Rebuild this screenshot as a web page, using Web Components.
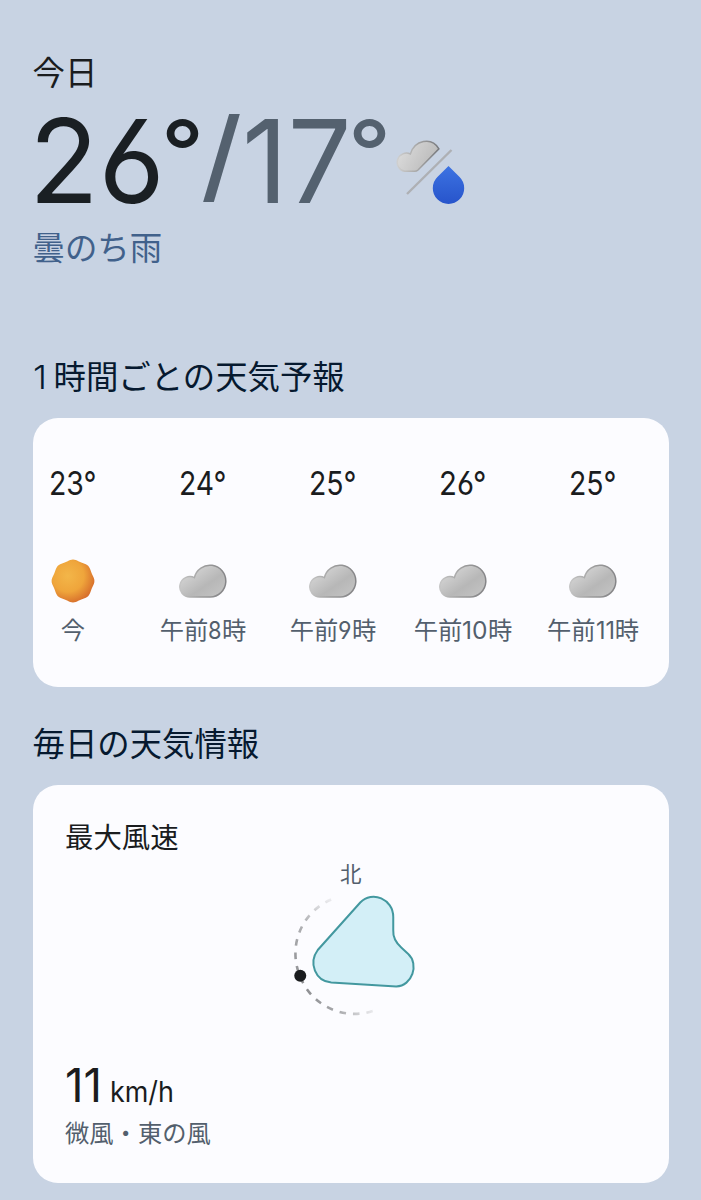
<!DOCTYPE html>
<html lang="ja">
<head>
<meta charset="UTF-8">
<title>天気</title>
<style>
    body {
        margin: 0;
        background: #c8d3e3;
        font-family: "Noto Sans CJK JP", "Noto Sans", sans-serif;
        color: #1a1c1e;
    }
</style>
</head>
<body>
<weather-app></weather-app>

<script>
// Latin digits and units, squeezed to the narrow widths of the design
class LatinText extends HTMLElement {
    constructor() {
        super();
        this.attachShadow({ mode: "open" });
        this.shadowRoot.innerHTML = `
            <style>
                :host {
                    display: inline-block;
                    font-family: Inter, "Noto Sans", sans-serif;
                    font-feature-settings: "cv03", "cv04";
                    white-space: nowrap;
                }
                span {
                    display: inline-block;
                    transform-origin: 0 50%;
                }
            </style>
            <span><slot></slot></span>
        `;
    }

    connectedCallback() {
        const width = parseFloat(this.getAttribute("width"));
        const span = this.shadowRoot.querySelector("span");
        const natural = span.getBoundingClientRect().width;
        if (width && natural) {
            this.style.width = width + "px";
            span.style.transform = `scaleX(${width / natural})`;
        }
    }
}

// Sun outline: a circle with eight soft lobes
function sunPath() {
    const points = [];
    for (let i = 0; i < 96; i++) {
        const a = (i / 96) * Math.PI * 2;
        const r = 20.8 + 0.6 * Math.cos(a * 8);
        points.push((22 + r * Math.cos(a)).toFixed(2) + " " + (22 + r * Math.sin(a)).toFixed(2));
    }
    return "M" + points.join("L") + "Z";
}

class WeatherIcon extends HTMLElement {
    constructor() {
        super();
        this.attachShadow({ mode: "open" });
    }

    connectedCallback() {
        const icons = {
            sun: `
                <svg width="44" height="44" viewBox="0 0 44 44">
                    <defs>
                        <radialGradient id="s" cx=".38" cy=".38" r=".68">
                            <stop offset="0" stop-color="#f3b649"/>
                            <stop offset=".55" stop-color="#efa53b"/>
                            <stop offset="1" stop-color="#d5692a"/>
                        </radialGradient>
                    </defs>
                    <path fill="url(#s)" d="${sunPath()}"/>
                </svg>`,
            cloud: `
                <svg width="48" height="34" viewBox="0 0 48 34">
                    <defs>
                        <linearGradient id="c" x1="0" y1="0" x2="1" y2="1">
                            <stop offset=".1" stop-color="#dadada"/>
                            <stop offset=".6" stop-color="#b7b7b7"/>
                            <stop offset="1" stop-color="#c6c6c6"/>
                        </linearGradient>
                        <linearGradient id="e" x1="0" y1=".4" x2="1" y2=".5">
                            <stop offset="0" stop-color="#c8c8c8"/>
                            <stop offset=".5" stop-color="#9c9c9c"/>
                            <stop offset="1" stop-color="#858588"/>
                        </linearGradient>
                    </defs>
                    <path fill="url(#c)" stroke="url(#e)" stroke-width="1.500" d="M11 33A10.200 10.200 0 1 1 15.400 13.600A15.900 15.900 0 1 1 31.200 33Z"/>
                </svg>`,
            "cloud-rain": `
                <svg width="72" height="64" viewBox="0 0 72 64">
                    <defs>
                        <linearGradient id="c" x1="0" y1=".3" x2="1" y2=".7">
                            <stop offset="0" stop-color="#dcdcdc"/>
                            <stop offset="1" stop-color="#b7b7b7"/>
                        </linearGradient>
                        <linearGradient id="e" x1="0" y1=".4" x2="1" y2=".4">
                            <stop offset="0" stop-color="#cfcfcf"/>
                            <stop offset=".5" stop-color="#a5a5a5"/>
                            <stop offset="1" stop-color="#77797d"/>
                        </linearGradient>
                        <linearGradient id="d" x1="0" y1="0" x2="0" y2="1">
                            <stop offset="0" stop-color="#3d73e2"/>
                            <stop offset="1" stop-color="#2754cb"/>
                        </linearGradient>
                    </defs>
                    <path fill="url(#c)" stroke="url(#e)" stroke-width="1.500" d="M9.500 31.300A9.200 9.200 0 1 1 15.400 14C19.500 .2 36.500-3.600 43.900 8.800L23 30Q21.600 31.300 19.600 31.300Z"/>
                    <path stroke="#aeb0b4" stroke-width="2.400" d="M12 54L56.500 10"/>
                    <path fill="url(#d)" d="M53.500 26L64.600 37.100A15.700 15.700 0 1 1 42.400 37.100Z"/>
                </svg>`
        };
        this.shadowRoot.innerHTML = `
            <style>
                :host { display: block; }
                svg { display: block; }
            </style>
            ${icons[this.getAttribute("name")]}
        `;
    }
}

class TodaySummary extends HTMLElement {
    constructor() {
        super();
        this.attachShadow({ mode: "open" });
        this.shadowRoot.innerHTML = `
            <style>
                :host {
                    display: block;
                    height: 304px;
                    font-size: 32.400px;
                    line-height: 40px;
                }
                .temps {
                    display: flex;
                    align-items: flex-start;
                    height: 135px;
                    font-size: 116px;
                    line-height: 140px;
                    color: #1a1f23;
                }
                .high { margin-left: -3.500px; }
                .degree {
                    margin: -10px 0 0 -4px;
                    font-size: 86px;
                    font-weight: 500;
                }
                .slash {
                    margin: -7px 0 0 -3px;
                    font-size: 101px;
                    font-weight: 500;
                }
                .low { color: #54616f; }
                weather-icon { margin: 49px 0 0 4px; }
                .condition { color: #41618b; }
            </style>
            <div>今日</div>
            <div class="temps">
                <latin-text class="high" width="136">26</latin-text>
                <latin-text class="degree" width="43">°</latin-text>
                <latin-text class="low slash" width="41">/</latin-text>
                <latin-text class="low" width="109.500">17</latin-text>
                <latin-text class="low degree" width="43">°</latin-text>
                <weather-icon name="cloud-rain"></weather-icon>
            </div>
            <div class="condition">曇のち雨</div>
        `;
    }
}

class SectionHeading extends HTMLElement {
    constructor() {
        super();
        this.attachShadow({ mode: "open" });
        this.shadowRoot.innerHTML = `
            <style>
                :host {
                    display: block;
                    height: 63px;
                    font-size: 32.400px;
                    line-height: 40px;
                    color: #06192f;
                    white-space: nowrap;
                }
            </style>
            <slot></slot>
        `;
    }
}

class WeatherCard extends HTMLElement {
    constructor() {
        super();
        this.attachShadow({ mode: "open" });
        this.shadowRoot.innerHTML = `
            <style>
                :host {
                    display: block;
                    box-sizing: border-box;
                    background: #fcfcff;
                    border-radius: 25px;
                    overflow: hidden;
                }
            </style>
            <slot></slot>
        `;
    }
}

class HourItem extends HTMLElement {
    constructor() {
        super();
        this.attachShadow({ mode: "open" });
    }

    connectedCallback() {
        const time = this.getAttribute("time")
            .replace(/\d+/, (n) => `<latin-text width="${n.length > 1 ? (n === "11" ? 19 : 25.5) : 13.5}">${n}</latin-text>`);
        this.shadowRoot.innerHTML = `
            <style>
                :host {
                    display: flex;
                    flex-direction: column;
                    align-items: center;
                }
                .temp {
                    height: 40px;
                    font-size: 33px;
                    line-height: 40px;
                    color: #1a1c1e;
                }
                .icon {
                    display: flex;
                    align-items: center;
                    height: 48px;
                    margin-top: 56px;
                }
                .time {
                    margin-top: 8px;
                    font-size: 24.300px;
                    line-height: 32px;
                    color: #535f6d;
                    white-space: nowrap;
                }
            </style>
            <div class="temp"><latin-text width="47.500">${this.getAttribute("temp")}</latin-text></div>
            <div class="icon"><weather-icon name="${this.getAttribute("icon")}"></weather-icon></div>
            <div class="time">${time}</div>
        `;
    }
}

class WindCompass extends HTMLElement {
    constructor() {
        super();
        this.attachShadow({ mode: "open" });
        this.shadowRoot.innerHTML = `
            <style>
                :host {
                    display: flex;
                    flex-direction: column;
                    align-items: center;
                    font-size: 21.500px;
                    line-height: 28px;
                    color: #535f6d;
                }
                svg { display: block; margin-top: 1px; }
            </style>
            <div>北</div>
            <svg width="140" height="140" viewBox="280.750 888 140 140">
                <defs>
                    <linearGradient id="up" gradientUnits="userSpaceOnUse" x1="0" y1="976" x2="0" y2="898">
                        <stop offset=".2" stop-color="#97989b"/>
                        <stop offset=".7" stop-color="#b2b3b6"/>
                        <stop offset="1" stop-color="#efeff2"/>
                    </linearGradient>
                    <linearGradient id="down" gradientUnits="userSpaceOnUse" x1="300" y1="0" x2="376" y2="0">
                        <stop offset="0" stop-color="#8a8b8e"/>
                        <stop offset=".5" stop-color="#a9aaad"/>
                        <stop offset="1" stop-color="#efeff2"/>
                    </linearGradient>
                </defs>
                <g fill="none" stroke-width="2.600" stroke-dasharray="6.500 7">
                    <path stroke="url(#up)" stroke-dashoffset="-3.500" d="M299.500 975.500A58.500 58.500 0 0 1 331 899.500"/>
                    <path stroke="url(#down)" stroke-dashoffset="-2" d="M299.500 975.500A58.500 58.500 0 0 0 374 1010.500"/>
                </g>
                <path fill="#d3eff7" stroke="#43989f" stroke-width="2" d="M360 902.500C372 890 393 899 393 917V930C392.500 938 396 943 401 947.500L408 954C419 964 412 986 396 986.500L331 982.500C315 981 308 963 317.500 950Z"/>
                <circle cx="300" cy="975.800" r="6" fill="#1a1c1e"/>
            </svg>
        `;
    }
}

class WindPanel extends HTMLElement {
    constructor() {
        super();
        this.attachShadow({ mode: "open" });
        this.shadowRoot.innerHTML = `
            <style>
                :host {
                    display: block;
                    box-sizing: border-box;
                    padding: 31px 32.500px 0;
                }
                .title {
                    font-size: 28.400px;
                    line-height: 40px;
                    height: 43px;
                }
                .speed {
                    display: flex;
                    align-items: baseline;
                    gap: 8px;
                    height: 59px;
                    margin-top: 29px;
                    font-size: 46px;
                    line-height: 56px;
                }
                .unit { font-size: 29px; }
                .note {
                    font-size: 24.300px;
                    line-height: 32px;
                    color: #535f6d;
                }
            </style>
            <div class="title">最大風速</div>
            <wind-compass></wind-compass>
            <div class="speed">
                <latin-text width="37">11</latin-text>
                <latin-text class="unit" width="64">km/h</latin-text>
            </div>
            <div class="note">微風・東の風</div>
        `;
    }
}

class WeatherApp extends HTMLElement {
    constructor() {
        super();
        this.attachShadow({ mode: "open" });
        this.shadowRoot.innerHTML = `
            <style>
                :host {
                    display: block;
                    box-sizing: border-box;
                    height: 1200px;
                    padding: 51px 32px 0 32.500px;
                    overflow: hidden;
                }
                .hourly { height: 269px; }
                .hours {
                    display: grid;
                    grid-template-columns: repeat(5, 130px);
                    margin-left: -24.500px;
                    padding-top: 43px;
                }
                .count {
                    margin-right: 7px;
                    font-weight: 300;
                }
                .daily { height: 398px; }
                section + section { margin-top: 35px; }
            </style>
            <today-summary></today-summary>
            <section>
                <section-heading><latin-text class="count" width="14">1</latin-text>時間ごとの天気予報</section-heading>
                <weather-card class="hourly">
                    <div class="hours">
                        <hour-item temp="23°" icon="sun" time="今"></hour-item>
                        <hour-item temp="24°" icon="cloud" time="午前8時"></hour-item>
                        <hour-item temp="25°" icon="cloud" time="午前9時"></hour-item>
                        <hour-item temp="26°" icon="cloud" time="午前10時"></hour-item>
                        <hour-item temp="25°" icon="cloud" time="午前11時"></hour-item>
                    </div>
                </weather-card>
            </section>
            <section>
                <section-heading>毎日の天気情報</section-heading>
                <weather-card class="daily"><wind-panel></wind-panel></weather-card>
            </section>
        `;
    }
}

customElements.define("latin-text", LatinText);
customElements.define("weather-icon", WeatherIcon);
customElements.define("today-summary", TodaySummary);
customElements.define("section-heading", SectionHeading);
customElements.define("weather-card", WeatherCard);
customElements.define("hour-item", HourItem);
customElements.define("wind-compass", WindCompass);
customElements.define("wind-panel", WindPanel);
customElements.define("weather-app", WeatherApp);
</script>
</body>
</html>
